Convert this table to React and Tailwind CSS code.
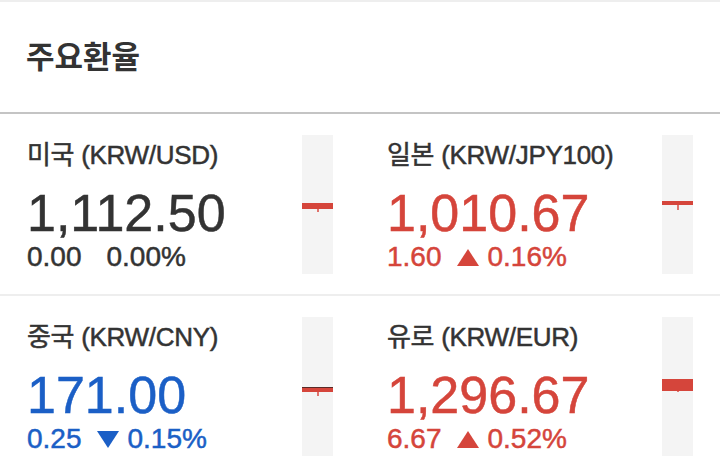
import React from 'react';

const RED = '#d5453b';
const BLUE = '#1b5fc6';

const rates = [
  { name: '미국 (KRW/USD)', price: '1,112.50', change: '0.00', pct: '0.00%', dir: 'flat', bar: { y: 68, h: 6, wick: 3 } },
  { name: '일본 (KRW/JPY100)', price: '1,010.67', change: '1.60', pct: '0.16%', dir: 'up', bar: { y: 66, h: 4, wick: 5 } },
  { name: '중국 (KRW/CNY)', price: '171.00', change: '0.25', pct: '0.15%', dir: 'down', bar: { y: 70, h: 5, wick: 4, dark: true } },
  { name: '유로 (KRW/EUR)', price: '1,296.67', change: '6.67', pct: '0.52%', dir: 'up', bar: { y: 62, h: 12, wick: 1 } },
];

function Candle({ bar }) {
  return (
    <svg width="31" height="139" className="shrink-0 bg-[#f4f4f4]">
      <rect x="15" y={bar.y + bar.h} width="2" height={bar.wick} fill="#e0736c" />
      <rect x="0" y={bar.y} width="31" height={bar.h} fill={RED} />
      {bar.dark && <rect x="0" y={bar.y} width="31" height="1" fill="#5a2a27" />}
    </svg>
  );
}

function Rate({ r }) {
  const color = r.dir === 'up' ? 'text-[#d5453b]' : r.dir === 'down' ? 'text-[#1b5fc6]' : 'text-[#333]';
  return (
    <div className="flex items-center justify-between px-[27px] h-[180px]">
      <div className="flex flex-col pt-[3px] [-webkit-text-stroke:0.5px_currentColor]">
        <div className="text-[26px] leading-[30px] text-[#333] tracking-[-0.3px]">{r.name}</div>
        <div className={`text-[52px] leading-[52px] mt-[17px] ${color}`}>{r.price}</div>
        <div className={`flex items-center text-[28px] leading-[28px] mt-[4px] ${color}`}>
          <span>{r.change}</span>
          {r.dir === 'flat' && <span className="w-[25px]" />}
          {r.dir === 'up' && (
            <svg width="24" height="19" viewBox="0 0 24 19" className="ml-[14px] mr-[8px]">
              <polygon points="12,1 23,18 1,18" fill={RED} />
            </svg>
          )}
          {r.dir === 'down' && (
            <svg width="24" height="19" viewBox="0 0 24 19" className="ml-[14px] mr-[8px]">
              <polygon points="1,1 23,1 12,18" fill={BLUE} />
            </svg>
          )}
          <span>{r.pct}</span>
        </div>
      </div>
      <Candle bar={r.bar} />
    </div>
  );
}

export default function App() {
  return (
    <div className="w-[720px] h-[471px] overflow-hidden bg-white font-['Liberation_Sans','Noto_Sans_CJK_KR',sans-serif]">
      <div className="h-[2px] bg-[#eeeeee]" />
      <div className="h-[112px] flex items-center px-[26px] border-b-2 border-[#c4c4c4]">
        <h1 className="text-[31px] font-bold text-[#333] pt-[2px]">주요환율</h1>
      </div>
      <div className="grid grid-cols-2">
        <Rate r={rates[0]} />
        <Rate r={rates[1]} />
      </div>
      <div className="h-[2px] bg-[#eeeeee]" />
      <div className="grid grid-cols-2">
        <Rate r={rates[2]} />
        <Rate r={rates[3]} />
      </div>
    </div>
  );
}
